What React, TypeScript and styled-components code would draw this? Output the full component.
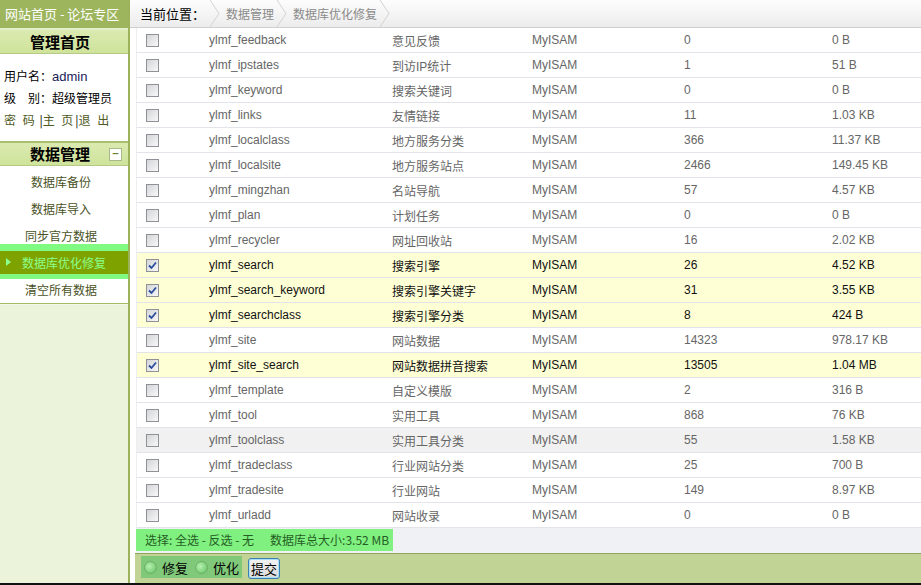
import styled, { createGlobalStyle, css } from 'styled-components'

const GlobalStyle = createGlobalStyle`
  html, body {
    margin: 0;
    padding: 0;
    background: #fff;
  }
  body {
    font-family: "Liberation Sans", "Noto Sans CJK SC", Arial, sans-serif;
    font-size: 12px;
  }
`

interface TableRow {
  name: string
  desc: string
  rows: string
  size: string
  checked?: boolean
  hover?: boolean
}

const TABLES: TableRow[] = [
  { name: 'ylmf_feedback', desc: '意见反馈', rows: '0', size: '0 B' },
  { name: 'ylmf_ipstates', desc: '到访IP统计', rows: '1', size: '51 B' },
  { name: 'ylmf_keyword', desc: '搜索关键词', rows: '0', size: '0 B' },
  { name: 'ylmf_links', desc: '友情链接', rows: '11', size: '1.03 KB' },
  { name: 'ylmf_localclass', desc: '地方服务分类', rows: '366', size: '11.37 KB' },
  { name: 'ylmf_localsite', desc: '地方服务站点', rows: '2466', size: '149.45 KB' },
  { name: 'ylmf_mingzhan', desc: '名站导航', rows: '57', size: '4.57 KB' },
  { name: 'ylmf_plan', desc: '计划任务', rows: '0', size: '0 B' },
  { name: 'ylmf_recycler', desc: '网址回收站', rows: '16', size: '2.02 KB' },
  { name: 'ylmf_search', desc: '搜索引擎', rows: '26', size: '4.52 KB', checked: true },
  { name: 'ylmf_search_keyword', desc: '搜索引擎关键字', rows: '31', size: '3.55 KB', checked: true },
  { name: 'ylmf_searchclass', desc: '搜索引擎分类', rows: '8', size: '424 B', checked: true },
  { name: 'ylmf_site', desc: '网站数据', rows: '14323', size: '978.17 KB' },
  { name: 'ylmf_site_search', desc: '网站数据拼音搜索', rows: '13505', size: '1.04 MB', checked: true },
  { name: 'ylmf_template', desc: '自定义模版', rows: '2', size: '316 B' },
  { name: 'ylmf_tool', desc: '实用工具', rows: '868', size: '76 KB' },
  { name: 'ylmf_toolclass', desc: '实用工具分类', rows: '55', size: '1.58 KB', hover: true },
  { name: 'ylmf_tradeclass', desc: '行业网站分类', rows: '25', size: '700 B' },
  { name: 'ylmf_tradesite', desc: '行业网站', rows: '149', size: '8.97 KB' },
  { name: 'ylmf_urladd', desc: '网站收录', rows: '0', size: '0 B' },
]

const MENU = ['数据库备份', '数据库导入', '同步官方数据', '数据库优化修复', '清空所有数据']
const ACTIVE_MENU = 3

function Chevron() {
  return (
    <ChevronSvg width="12" height="27" viewBox="0 0 12 27">
      <polyline points="1,0 10,13.5 1,27" fill="none" stroke="#d2d2d2" strokeWidth="1" />
    </ChevronSvg>
  )
}

function CheckBox({ checked }: { checked?: boolean }) {
  return (
    <Box>
      {checked && (
        <svg width="9" height="9" viewBox="0 0 9 9">
          <path d="M1 4.5 L3.5 7 L8 1.5" fill="none" stroke="#2a4c9c" strokeWidth="1.8" />
        </svg>
      )}
    </Box>
  )
}

function App() {
  return (
    <>
      <GlobalStyle />
      <Page>
        <Sidebar>
          <TopLink>网站首页 - 论坛专区</TopLink>
          <SectionHead $first>管理首页</SectionHead>
          <UserInfo>
            <InfoLine>
              用户名：<UserName>admin</UserName>
            </InfoLine>
            <InfoLine>级　别：超级管理员</InfoLine>
            <InfoLine>
              <NavLink>密 码</NavLink> |<NavLink>主 页</NavLink>|<NavLink>退 出</NavLink>
            </InfoLine>
          </UserInfo>
          <SectionHead>
            数据管理
            <Toggle>−</Toggle>
          </SectionHead>
          <Menu>
            {MENU.map((m, i) => (
              <MenuItem key={m} $active={i === ACTIVE_MENU}>
                {i === ACTIVE_MENU && <Arrow />}
                {m}
              </MenuItem>
            ))}
          </Menu>
          <SideFill />
        </Sidebar>

        <Main>
          <Breadcrumb>
            <CrumbLabel>当前位置：</CrumbLabel>
            <Chevron />
            <Crumb>数据管理</Crumb>
            <Chevron />
            <Crumb>数据库优化修复</Crumb>
            <Chevron />
          </Breadcrumb>

          <Table>
            {TABLES.map((t) => (
              <Row key={t.name} $checked={t.checked} $hover={t.hover}>
                <Cell $first>
                  <CheckBox checked={t.checked} />
                </Cell>
                <Cell>{t.name}</Cell>
                <Cell>{t.desc}</Cell>
                <Cell>MyISAM</Cell>
                <Cell>{t.rows}</Cell>
                <Cell>{t.size}</Cell>
              </Row>
            ))}
          </Table>

          <StatusRow>
            <StatusBar>
              选择: 全选 - 反选 - 无<TotalSize>数据库总大小:3.52 MB</TotalSize>
            </StatusBar>
          </StatusRow>

          <ActionBar>
            <RadioGroup>
              <RadioLabel>
                <Radio />
                修复
              </RadioLabel>
              <RadioLabel>
                <Radio />
                优化
              </RadioLabel>
            </RadioGroup>
            <SubmitButton>提交</SubmitButton>
          </ActionBar>
        </Main>
      </Page>
    </>
  )
}

export default App

const Page = styled.div`
  display: flex;
  height: 585px;
  box-sizing: border-box;
  border-bottom: 2px solid #111;
  overflow: hidden;
`

const Sidebar = styled.div`
  width: 128px;
  flex-shrink: 0;
  display: flex;
  flex-direction: column;
  border-right: 2px solid #9db35b;
  font-family: "Noto Sans CJK SC", "Liberation Sans", sans-serif;
`

const TopLink = styled.div`
  height: 28px;
  line-height: 27px;
  background: #9db55d;
  color: #fff;
  font-size: 13px;
  padding-left: 5px;
  white-space: nowrap;
  border-bottom: 2px solid #e4eecb;
`

const SectionHead = styled.div<{ $first?: boolean }>`
  position: relative;
  height: 23px;
  line-height: 23px;
  text-align: center;
  padding-right: 8px;
  font-size: 15px;
  font-weight: bold;
  color: #000;
  background: linear-gradient(#dbeab0, #cfe39b);
  border-bottom: 1px solid #b3c985;
  ${({ $first }) =>
    !$first &&
    css`
      border-top: 2px solid #a8bf6d;
      height: 22px;
      line-height: 22px;
    `}
`

const Toggle = styled.span`
  position: absolute;
  right: 6px;
  top: 5px;
  width: 11px;
  height: 11px;
  line-height: 9px;
  font-size: 11px;
  font-weight: bold;
  text-align: center;
  color: #6a7d3a;
  background: #fff;
  border: 1px solid #a8b98a;
`

const UserInfo = styled.div`
  padding: 11px 0 10px 4px;
  background: #fff;
`

const InfoLine = styled.div`
  height: 22px;
  line-height: 22px;
  font-size: 12px;
  color: #000;
  white-space: nowrap;
`

const UserName = styled.span`
  color: #1a1a5a;
  font-family: "Liberation Sans", sans-serif;
  font-size: 13px;
`

const NavLink = styled.span`
  color: #4f5a24;
  letter-spacing: 2px;
`

const Menu = styled.div`
  background: #fff;
  padding: 2px 0 0;
  border-bottom: 1px solid #a4bb64;
`

const MenuItem = styled.div<{ $active?: boolean }>`
  position: relative;
  height: 27px;
  line-height: 27px;
  font-size: 12px;
  text-align: center;
  padding-right: 6px;
  color: #4a5226;
  ${({ $active }) =>
    $active &&
    css`
      z-index: 1;
      height: 23px;
      line-height: 23px;
      margin: 2px 0;
      background: #7ea300;
      color: #8cff8c;
      padding-left: 6px;
      box-shadow: 0 -7px 0 #80fa80, 0 5px 0 #80fa80;
    `}
`

const Arrow = styled.span`
  position: absolute;
  left: 6px;
  top: 7px;
  width: 0;
  height: 0;
  border-top: 4px solid transparent;
  border-bottom: 4px solid transparent;
  border-left: 5px solid #8cff8c;
`

const SideFill = styled.div`
  flex: 1;
  background: #ebf3da;
  border-top: 1px solid #f3f8ea;
`

const Main = styled.div`
  flex: 1;
  display: flex;
  flex-direction: column;
  min-width: 0;
`

const Breadcrumb = styled.div`
  height: 27px;
  display: flex;
  align-items: center;
  background: linear-gradient(#fdfdfd, #ececec);
  border-bottom: 1px solid #cfcfcf;
  font-family: "Noto Sans CJK SC", "Liberation Sans", sans-serif;
  font-size: 13px;
  padding-left: 10px;
`

const CrumbLabel = styled.span`
  color: #000;
  margin-right: 4px;
`

const Crumb = styled.span`
  color: #8a8a8a;
  font-size: 12px;
  margin: 0 2px 0 5px;
`

const ChevronSvg = styled.svg`
  display: block;
  flex-shrink: 0;
`

const Table = styled.div`
  margin-left: 6px;
  display: flex;
  flex-direction: column;
`

const Row = styled.div<{ $checked?: boolean; $hover?: boolean }>`
  display: grid;
  grid-template-columns: 72px 183px 140px 152px 148px 1fr;
  height: 24px;
  align-items: center;
  border-bottom: 1px solid #e2e4ea;
  border-left: 1px solid #eceef2;
  background: ${({ $checked, $hover }) => ($checked ? '#ffffd6' : $hover ? '#f1f1f1' : '#fff')};
  color: ${({ $checked }) => ($checked ? '#111' : '#666')};
`

const Cell = styled.div<{ $first?: boolean }>`
  white-space: nowrap;
  font-size: 12px;
  font-family: "Liberation Sans", "Noto Sans CJK SC", sans-serif;
  padding-left: ${({ $first }) => ($first ? '9px' : '0')};
  display: flex;
  align-items: center;
`

const Box = styled.span`
  width: 11px;
  height: 11px;
  border: 1px solid #8f9196;
  background: linear-gradient(135deg, #d4d5d8, #f8f8f8);
  display: flex;
  align-items: center;
  justify-content: center;
`

const StatusRow = styled.div`
  margin-left: 6px;
  height: 25px;
  padding-top: 1px;
  box-sizing: border-box;
  background: #f0f1f4;
`

const StatusBar = styled.div`
  width: 257px;
  height: 22px;
  line-height: 22px;
  background: #80f180;
  color: #255d25;
  font-family: "Noto Sans CJK SC", "Liberation Sans", sans-serif;
  font-size: 12px;
  padding-left: 9px;
  box-sizing: border-box;
  white-space: nowrap;
`

const TotalSize = styled.span`
  margin-left: 16px;
`

const ActionBar = styled.div`
  flex: 1;
  margin-left: 5px;
  background: #c1d495;
  border-top: 1px solid #8fa65c;
  display: flex;
  align-items: flex-start;
  padding: 2px 0 0 6px;
  gap: 6px;
`

const RadioGroup = styled.div`
  display: flex;
  align-items: center;
  height: 22px;
  width: 101px;
  background: #80c97a;
  padding-left: 3px;
  box-sizing: border-box;
  gap: 7px;
`

const RadioLabel = styled.label`
  display: flex;
  align-items: center;
  gap: 5px;
  font-family: "Noto Sans CJK SC", sans-serif;
  font-size: 13px;
  color: #000;
`

const Radio = styled.span`
  width: 11px;
  height: 11px;
  border-radius: 50%;
  border: 1px solid #6cae68;
  background: radial-gradient(circle at 40% 40%, #b8f0b4, #5fc05a);
`

const SubmitButton = styled.button`
  margin-top: 2px;
  height: 21px;
  padding: 0 2px;
  font-family: "Noto Sans CJK SC", sans-serif;
  font-size: 13px;
  color: #000;
  border: 1px solid #3c7fb1;
  border-radius: 3px;
  background: linear-gradient(#f4f4f4, #dadada);
  box-shadow: inset 0 0 0 1px #a8dff8;
  line-height: 17px;
`
